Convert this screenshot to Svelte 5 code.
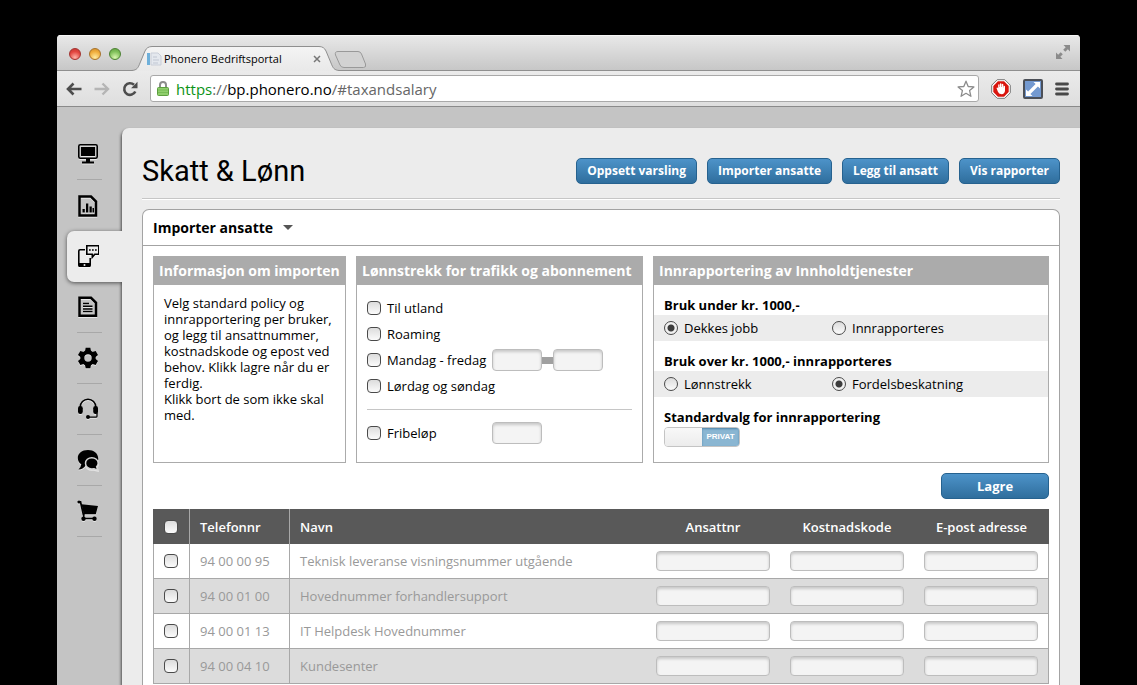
<script>
  const menu = [
    { id: 'monitor', label: 'Oversikt' },
    { id: 'chart', label: 'Statistikk', plain: true },
    { id: 'phone', label: 'Abonnement', active: true, plain: true },
    { id: 'doc', label: 'Faktura' },
    { id: 'gear', label: 'Innstillinger' },
    { id: 'headset', label: 'Support' },
    { id: 'chat', label: 'Meldinger' },
    { id: 'cart', label: 'Butikk' }
  ]

  const actions = ['Oppsett varsling', 'Importer ansatte', 'Legg til ansatt', 'Vis rapporter']

  const employees = [
    { phone: '94 00 00 95', name: 'Teknisk leveranse visningsnummer utgående' },
    { phone: '94 00 01 00', name: 'Hovednummer forhandlersupport' },
    { phone: '94 00 01 13', name: 'IT Helpdesk Hovednummer' },
    { phone: '94 00 04 10', name: 'Kundesenter' }
  ]

  const fields = ['Ansattnr', 'Kostnadskode', 'E-post adresse']

  let under = $state('jobb')
  let over = $state('fordel')
  let privat = $state(true)
  let selected = $state(employees.map(() => false))

  function toggleAll(e) {
    selected = employees.map(() => e.target.checked)
  }
</script>

<div class="desktop">
  <div class="window">
    <div class="tabstrip">
      <div class="lights">
        <button class="light red" aria-label="Lukk"></button>
        <button class="light yellow" aria-label="Minimer"></button>
        <button class="light green" aria-label="Zoom"></button>
      </div>
      <div class="tab">
        <svg class="tabshape" viewBox="0 0 207 25" preserveAspectRatio="none">
          <defs>
            <linearGradient id="tabfill" x1="0" y1="0" x2="0" y2="1">
              <stop offset="0" stop-color="#f4f4f4" />
              <stop offset="1" stop-color="#e9e9e9" />
            </linearGradient>
          </defs>
          <path d="M0 24.5C5 24 6 22 8 17L13 5Q15 .5 20 .5H187Q192 .5 194 5L199 17C201 22 202 24 207 24.5V25H0Z" fill="url(#tabfill)" />
          <path d="M0 24.5C5 24 6 22 8 17L13 5Q15 .5 20 .5H187Q192 .5 194 5L199 17C201 22 202 24 207 24.5" fill="none" stroke="#8f8f8f" />
        </svg>
        <svg class="favicon" width="16" height="16" viewBox="0 0 16 16">
          <path d="M1 2h3v12H1z" fill="#6fb0da" />
          <path d="M5 2h7l3 3v9H5z" fill="#e4e8ee" stroke="#c9ced8" />
          <path d="M7 6h4M7 9h6M7 12h5" stroke="#c0c6d2" />
        </svg>
        <span class="tabtitle">Phonero Bedriftsportal</span>
        <button class="close" aria-label="Lukk fane">
          <svg width="8" height="8" viewBox="0 0 8 8"><path d="M1 1l6 6M7 1l-6 6" stroke="#777" stroke-width="1.5" /></svg>
        </button>
      </div>
      <button class="newtab" aria-label="Ny fane">
        <svg width="34" height="17" viewBox="0 0 34 17">
          <path d="M4 .5H24Q26.500 .5 27.500 3L31.500 13Q32.500 16.500 29.500 16.500H10Q7 16.500 6 14L1.500 4Q.5 .5 4 .5Z" fill="#d2d2d2" stroke="#999" />
        </svg>
      </button>
      <svg class="expand" width="16" height="16" viewBox="0 0 16 16">
        <path d="M8.500 1H15V7.500L12.800 5.300L10.300 7.800L8.200 5.700L10.700 3.200ZM1 8.500V15H7.500L5.300 12.800L7.800 10.300L5.700 8.200L3.200 10.700Z" fill="#8b8b8b" />
      </svg>
    </div>

    <div class="toolbar">
      <button aria-label="Tilbake">
        <svg width="16" height="14" viewBox="0 0 16 14"><path d="M15.500 7H2M7.500 1.500L2 7l5.500 5.500" fill="none" stroke="#4d4d4d" stroke-width="2.600" /></svg>
      </button>
      <button aria-label="Frem">
        <svg width="16" height="14" viewBox="0 0 16 14"><path d="M.5 7H14M8.500 1.500L14 7l-5.500 5.500" fill="none" stroke="#b5b5b5" stroke-width="2.400" /></svg>
      </button>
      <button aria-label="Last på nytt">
        <svg width="16" height="16" viewBox="0 0 16 16">
          <path d="M13.300 10.500A5.800 5.800 0 1 1 12 3.800" fill="none" stroke="#4d4d4d" stroke-width="2.600" />
          <path d="M15.500 .8V7.200H9.100Z" fill="#4d4d4d" />
        </svg>
      </button>
      <div class="omnibox">
        <svg width="12" height="15" viewBox="0 0 12 15">
          <path d="M3 7V4a3 3 0 0 1 6 0v3" fill="none" stroke="#8c8c8c" stroke-width="2" />
          <rect x=".5" y="6.500" width="11" height="8" rx="1" fill="#8fce6c" stroke="#5c9f3f" />
          <path d="M1 9h10M1 11.500h10" stroke="#77bb55" />
        </svg>
        <span class="url"><span class="scheme">https</span>://<b>bp.phonero.no</b>/#taxandsalary</span>
        <button class="star" aria-label="Bokmerke">
          <svg width="18" height="18" viewBox="0 0 18 18"><path d="M9 1.200l2.200 5.300 5.700.4-4.300 3.700 1.300 5.700L9 13.300l-4.900 3 1.300-5.700L1.100 6.900l5.700-.4z" fill="#fff" stroke="#8c8c8c" stroke-width="1.300" stroke-linejoin="round" /></svg>
        </button>
      </div>
      <button aria-label="Adblock">
        <svg width="20" height="20" viewBox="0 0 20 20">
          <path d="M6.200 .7h7.600l5.500 5.500v7.600l-5.500 5.500H6.200L.7 13.800V6.200z" fill="#fff" stroke="#777" />
          <path d="M6.900 2.300h6.200l4.600 4.600v6.200l-4.600 4.600H6.900l-4.600-4.600V6.900z" fill="#d9160f" />
          <path d="M5.500 9q.9-1 1.700 .3V5.800q.7-.9 1.300 0V8h.4V4.800q.8-1 1.500 0V8h.4V5.300q.8-1 1.500 0V8.500h.3V7q.8-.8 1.400.2V12q-.5 3-3.300 3.200Q7.500 15 6.800 12.500z" fill="#fff" />
        </svg>
      </button>
      <button aria-label="Endre størrelse">
        <svg width="20" height="20" viewBox="0 0 20 20">
          <rect x="1" y="1" width="18" height="18" rx="1" fill="#7399d0" stroke="#4b4f57" stroke-width="2" />
          <path d="M10.500 3H17V9.500L14.900 7.400L7.400 14.900L9.500 17H3V10.500L5.100 12.600L12.600 5.100Z" fill="#fff" />
        </svg>
      </button>
      <button aria-label="Meny">
        <svg width="14" height="14" viewBox="0 0 14 14"><path d="M1.500 2h11M1.500 7h11M1.500 12h11" stroke="#484848" stroke-width="2.800" stroke-linecap="round" /></svg>
      </button>
    </div>

    <div class="page">
      <nav>
        {#each menu as item (item.id)}
          <a href="#{item.id}" class="item" class:active={item.active} class:plain={item.plain} aria-label={item.label}>
            <svg width="22" height="22" viewBox="0 0 22 22">
              {#if item.id === 'monitor'}
                <rect x="1.800" y="1.800" width="18.400" height="13.400" rx="1.500" fill="none" stroke="#000" stroke-width="1.600" />
                <path d="M4 4h14v9H4zM9 15h4v3.500h-4zM5 18.500h12v2H5z" />
              {:else if item.id === 'chart'}
                <path d="M2.500 1.500h11.500l5 5v14h-16.500z" fill="none" stroke="#000" stroke-width="2.500" />
                <path d="M5.500 14h2.300v3.500H5.500zM9 8.500h2.300v9H9zM12.500 11.500h2.300v6h-2.300zM15.500 13h1.500v4.500h-1.500z" />
              {:else if item.id === 'phone'}
                <path d="M8 4.800H3Q1.800 4.800 1.800 6v14Q1.800 21.200 3 21.200h9Q13.200 21.200 13.200 20V13" fill="none" stroke="#000" stroke-width="1.600" />
                <path d="M1.500 18h12v3q0 1-1 1h-10q-1 0-1-1z" />
                <circle cx="7.500" cy="20" r="1" fill="#ececec" />
                <path d="M9.800 .8h12v8.400h-4l-2.500 3v-3H9.800z" fill="#ececec" stroke="#000" stroke-width="1.600" />
                <path d="M12 4.300h1.700v1.500H12zM15 4.300h1.700v1.500H15zM18 4.300h1.700v1.500H18z" />
              {:else if item.id === 'doc'}
                <path d="M2.500 1.800h11.500l5 5v13H2.500z" fill="none" stroke="#000" stroke-width="2.500" />
                <path d="M6 7.500h6M6 10.200h9.500M6 12.900h9.500M6 15.600h9.500" stroke="#000" stroke-width="1.500" />
              {:else if item.id === 'gear'}
                <g transform="translate(11 11)">
                  {#each [0, 60, 120, 180, 240, 300] as angle}
                    <path d="M-2.300-10.200h4.600l.9 4.200h-6.400z" transform="rotate({angle})" />
                  {/each}
                  <circle r="5.700" fill="none" stroke="#000" stroke-width="4" />
                </g>
              {:else if item.id === 'headset'}
                <path d="M3.200 11V9a7.800 7.800 0 0 1 15.600 0v2" fill="none" stroke="#000" stroke-width="1.600" />
                <rect x="1" y="8" width="4.800" height="8" rx="2.200" />
                <rect x="16.200" y="8" width="4.800" height="8" rx="2.200" />
                <path d="M20 14.500v3.700q0 1-1 1h-8" fill="none" stroke="#000" stroke-width="1.300" />
                <circle cx="11" cy="19" r="2" />
              {:else if item.id === 'chat'}
                <path d="M11 1C5 1 .8 4.500 .8 9c0 2.700 1.400 5 3.500 6.300Q4 18.500 1.500 20.500 6 20.300 8.500 16.800L21.200 11V9C20.800 4.200 16.800 1 11 1z" />
                <path d="M14.800 8.700c-3.500 0-6.300 2.400-6.300 5.600s2.800 5.700 6.300 5.700l2-.3q1.700 1.300 4.500 1.300-1.300-1.500-1.700-3.300 1.600-1.400 1.600-3.400c0-3.200-2.900-5.600-6.400-5.600z" stroke="#d4d4d4" stroke-width="1.500" />
              {:else}
                <path d="M1.500 1.800h2L6.500 15" fill="none" stroke="#000" stroke-width="1.800" stroke-linecap="round" />
                <circle cx="2" cy="2" r="1.500" />
                <path d="M4.500 4.200L21 6l-2.200 8.300H6.800zM6 14h1.500v4.500H6zM6 17.800h11v1.400H6z" />
                <circle cx="6.500" cy="18.800" r="2.200" />
                <circle cx="17.500" cy="18.800" r="2.200" />
              {/if}
            </svg>
          </a>
        {/each}
      </nav>

      <main>
        <header>
          <h1>Skatt &amp; Lønn</h1>
          <div class="actions">
            {#each actions as action}
              <button class="blue">{action}</button>
            {/each}
          </div>
        </header>

        <section class="box">
          <button class="boxtitle">Importer ansatte <span class="caret"></span></button>

          <div class="boxbody">
            <div class="cards">
              <div class="card">
                <h2>Informasjon om importen</h2>
                <p>Velg standard policy og innrapportering per bruker, og legg til ansattnummer, kostnadskode og epost ved behov. Klikk lagre når du er ferdig.<br />Klikk bort de som ikke skal med.</p>
              </div>

              <div class="card">
                <h2>Lønnstrekk for trafikk og abonnement</h2>
                <div class="checks">
                  <div class="row"><label><input type="checkbox" />Til utland</label></div>
                  <div class="row"><label><input type="checkbox" />Roaming</label></div>
                  <div class="row">
                    <label><input type="checkbox" />Mandag - fredag</label>
                    <input class="text" type="text" aria-label="Fra" />
                    <span class="dash"></span>
                    <input class="text" type="text" aria-label="Til" />
                  </div>
                  <div class="row"><label><input type="checkbox" />Lørdag og søndag</label></div>
                  <hr />
                  <div class="row">
                    <label><input type="checkbox" />Fribeløp</label>
                    <input class="text" type="text" aria-label="Beløp" />
                  </div>
                </div>
              </div>

              <div class="card">
                <h2>Innrapportering av Innholdtjenester</h2>
                <div class="groups">
                  <h3>Bruk under kr. 1000,-</h3>
                  <div class="radios">
                    <label><input type="radio" value="jobb" bind:group={under} />Dekkes jobb</label>
                    <label><input type="radio" value="inn" bind:group={under} />Innrapporteres</label>
                  </div>
                  <h3>Bruk over kr. 1000,- innrapporteres</h3>
                  <div class="radios">
                    <label><input type="radio" value="trekk" bind:group={over} />Lønnstrekk</label>
                    <label><input type="radio" value="fordel" bind:group={over} />Fordelsbeskatning</label>
                  </div>
                  <h3>Standardvalg for innrapportering</h3>
                  <button class="switch" role="switch" aria-checked={privat} aria-label="Standardvalg for innrapportering" onclick={() => (privat = !privat)}>
                    <span class="knob"></span>
                    <span class="state">{privat ? 'PRIVAT' : 'JOBB'}</span>
                  </button>
                </div>
              </div>
            </div>

            <div class="save"><button class="blue">Lagre</button></div>

            <table>
              <thead>
                <tr>
                  <th class="check"><input type="checkbox" aria-label="Velg alle" onchange={toggleAll} /></th>
                  <th class="phone">Telefonnr</th>
                  <th>Navn</th>
                  {#each fields as field}
                    <th class="field">{field}</th>
                  {/each}
                </tr>
              </thead>
              <tbody>
                {#each employees as employee, i (employee.phone)}
                  <tr>
                    <td class="check"><input type="checkbox" aria-label="Velg {employee.name}" bind:checked={selected[i]} /></td>
                    <td class="phone">{employee.phone}</td>
                    <td>{employee.name}</td>
                    {#each fields as field}
                      <td class="field"><input class="text" type="text" aria-label="{field} {employee.name}" /></td>
                    {/each}
                  </tr>
                {/each}
              </tbody>
            </table>
          </div>
        </section>
      </main>
    </div>
  </div>
</div>

<style>
:global(body) {
  margin: 0;
  background: #000;
}

.desktop {
  box-sizing: border-box;
  display: flex;
  min-height: 100vh;
  padding: 35px 57px 0;
  font: 13px/16px "Open Sans", "Noto Sans", sans-serif;
  color: #000;
}

.desktop * {
  box-sizing: border-box;
}

button {
  padding: 0;
  border: 0;
  background: none;
  font: inherit;
  color: inherit;
  cursor: pointer;
}

svg {
  display: block;
}

.window {
  flex: 1;
  display: flex;
  flex-direction: column;
  min-width: 0;
  border-radius: 4px 4px 0 0;
  overflow: hidden;
  background: #c4c4c4;
}

/* browser chrome */
.tabstrip {
  display: flex;
  align-items: flex-end;
  height: 36px;
  padding: 0 9px 0 12px;
  background: linear-gradient(#e9e9e9, #c6c6c6);
  box-shadow: inset 0 1px #f6f6f6, inset 0 -1px #8f8f8f;
}

.lights {
  display: flex;
  gap: 8px;
  margin-right: 11px;
  padding-bottom: 11px;
}

.light {
  width: 12px;
  height: 12px;
  border: 1px solid;
  border-radius: 50%;
}

.red {
  border-color: #a3322f;
  background: radial-gradient(circle at 50% 85%, #ffb3a8, #e2453f 60%, #c23732);
}

.yellow {
  border-color: #a8732a;
  background: radial-gradient(circle at 50% 85%, #ffeba0, #f0ad3c 60%, #cf8b2b);
}

.green {
  border-color: #4c8232;
  background: radial-gradient(circle at 50% 85%, #d9f7b0, #80c05a 60%, #5f9f40);
}

.tab {
  position: relative;
  display: flex;
  align-items: center;
  width: 207px;
  height: 25px;
  padding: 0 18px 0 14px;
  font-size: 11px;
}

.tabshape {
  position: absolute;
  inset: 0;
  width: 100%;
  height: 100%;
}

.favicon,
.tabtitle,
.close {
  position: relative;
}

.tabtitle {
  flex: 1;
  margin-left: 2px;
  white-space: nowrap;
}

.newtab {
  margin: 0 auto 3px -5px;
}

.expand {
  margin-bottom: 11px;
}

.toolbar {
  display: flex;
  align-items: center;
  gap: 12px;
  height: 36px;
  padding: 0 11px 0 9px;
  border-bottom: 1px solid #8a8a8a;
  background: linear-gradient(#ebebeb, #dedede);
}

.omnibox {
  flex: 1;
  display: flex;
  align-items: center;
  gap: 7px;
  min-width: 0;
  height: 27px;
  padding: 0 3px 0 6px;
  border: 1px solid #a9a9a9;
  border-radius: 3px;
  background: #fff;
}

.url {
  flex: 1;
  font-size: 15px;
  line-height: 20px;
  color: #666;
}

.url b {
  font-weight: 400;
  color: #000;
}

.scheme {
  color: #0b9316;
}

/* portal */
.page {
  flex: 1;
  display: flex;
  padding-top: 21px;
}

nav {
  display: flex;
  flex-direction: column;
  width: 65px;
  padding-top: 1px;
}

.item {
  display: flex;
  align-items: center;
  width: 25px;
  height: 51px;
  margin-left: 20px;
  border-bottom: 1px solid #a8a8a8;
}

.item svg {
  filter: drop-shadow(0 1px 0 rgba(255, 255, 255, 0.6));
}

.item.plain {
  border-bottom: 0;
}

.item.active {
  position: relative;
  z-index: 1;
  width: 55px;
  margin-left: 10px;
  padding: 0 0 2px 10px;
  border-radius: 7px 0 0 7px;
  background: #ececec;
  box-shadow: 0 1px 4px rgba(0, 0, 0, 0.6);
  clip-path: inset(-6px 0 -6px -6px);
}

main {
  flex: 1;
  display: flex;
  flex-direction: column;
  min-width: 0;
  padding: 0 20px;
  border-radius: 7px 0 0 0;
  background: #ececec;
  box-shadow: -1px 2px 3px rgba(0, 0, 0, 0.6);
}

header {
  display: flex;
  align-items: center;
  justify-content: space-between;
  height: 71px;
  margin-bottom: 10px;
  padding-top: 15px;
  border-bottom: 1px solid #c6c6c6;
  box-shadow: 0 1px #fff;
}

h1 {
  margin: 0;
  font: 400 29px/36px Roboto, "Open Sans", sans-serif;
}

.actions {
  display: flex;
  gap: 10px;
}

.blue {
  height: 26px;
  padding: 0 10px;
  border: 1px solid #26628f;
  border-radius: 5px;
  background: linear-gradient(#4d93c9, #2f6e9d);
  font-size: 12px;
  font-weight: 700;
  color: #fff;
  white-space: nowrap;
}

.box {
  flex: 1;
  border: 1px solid #a3a3a3;
  border-bottom: 0;
  border-radius: 7px 7px 0 0;
  background: #fff;
}

.boxtitle {
  display: flex;
  align-items: center;
  gap: 10px;
  width: 100%;
  height: 36px;
  padding: 0 10px;
  border-bottom: 1px solid #a3a3a3;
  font-size: 14px;
  font-weight: 700;
}

.caret {
  border: 5px solid transparent;
  border-top-color: #555;
  border-bottom: 0;
}

.boxbody {
  padding: 10px 10px 0;
}

.cards {
  display: grid;
  grid-template-columns: 193px 287px 1fr;
  gap: 10px;
}

.card {
  min-height: 207px;
  border: 1px solid #ababab;
}

h2 {
  margin: 0;
  padding: 0 5px;
  background: #ababab;
  font-size: 14px;
  font-weight: 700;
  line-height: 28px;
  color: #fff;
  white-space: nowrap;
}

p {
  margin: 0;
  padding: 10px;
}

input[type="checkbox"],
input[type="radio"] {
  appearance: none;
  flex: none;
  width: 14px;
  height: 14px;
  margin: 0;
  border: 1px solid #4a4a4a;
  border-radius: 4px;
  background: linear-gradient(#dcdcdc, #fbfbfb);
}

input[type="checkbox"]:checked {
  background: #555;
}

input[type="radio"] {
  border-radius: 50%;
}

input[type="radio"]:checked {
  background: radial-gradient(circle, #3c3c3c 3px, #f0f0f0 4px);
}

.text {
  width: 100%;
  height: 20px;
  padding: 0 4px;
  border: 1px solid #bdbdbd;
  border-radius: 4px;
  background: #f4f4f4;
  box-shadow: inset 0 2px 3px rgba(0, 0, 0, 0.18);
  font: inherit;
}

label {
  display: flex;
  align-items: center;
  gap: 6px;
}

.checks {
  padding: 10px;
}

.row {
  display: flex;
  align-items: center;
  height: 26px;
}

.row label {
  width: 125px;
  white-space: nowrap;
}

.row .text {
  width: 50px;
  height: 22px;
}

.dash {
  width: 11px;
  height: 7px;
  background: #a0a0a0;
}

hr {
  height: 1px;
  margin: 10px 0;
  border: 0;
  background: #c6c6c6;
}

.groups {
  padding-top: 11px;
}

h3 {
  margin: 0;
  padding: 0 10px;
  font-size: 13px;
  font-weight: 700;
  line-height: 19px;
}

.radios {
  display: flex;
  height: 26px;
  margin-bottom: 11px;
  padding: 0 10px;
  background: #ececec;
}

.radios label {
  width: 168px;
}

.switch {
  display: flex;
  width: 76px;
  height: 20px;
  margin-left: 10px;
  border: 1px solid #c4c4c4;
  border-radius: 4px;
  overflow: hidden;
}

.knob {
  flex: 1;
  background: linear-gradient(#f8f8f8, #ececec);
}

.state {
  width: 37px;
  background: #8ab6d2;
  box-shadow: inset 0 1px 2px #4f86ab;
  font: 700 8px/18px "Liberation Sans", Arial, sans-serif;
  color: #fff;
}

.save {
  display: flex;
  justify-content: flex-end;
  padding: 10px 0;
}

.save .blue {
  width: 108px;
  font-size: 13px;
}

table {
  width: 100%;
  border-collapse: separate;
  border-spacing: 0;
  table-layout: fixed;
}

th,
td {
  height: 35px;
  padding: 0 10px;
  text-align: left;
}

th {
  background: #595959;
  font-size: 13px;
  font-weight: 600;
  color: #fff;
}

td {
  padding-bottom: 1px;
  border-bottom: 1px solid #a8a8a8;
  color: #999;
}

td:first-child {
  border-left: 1px solid #a8a8a8;
}

td:last-child {
  border-right: 1px solid #a8a8a8;
}

tbody tr:nth-child(even) {
  background: #dcdcdc;
}

.check {
  width: 37px;
  border-right: 1px solid #a8a8a8;
}

th.check {
  padding-left: 11px;
}

.check input {
  display: block;
}

.phone {
  width: 100px;
  border-right: 1px solid #a8a8a8;
}

.field {
  width: 134px;
  text-align: center;
}

.field:last-child {
  width: 135px;
}

.field .text {
  display: block;
}
</style>
